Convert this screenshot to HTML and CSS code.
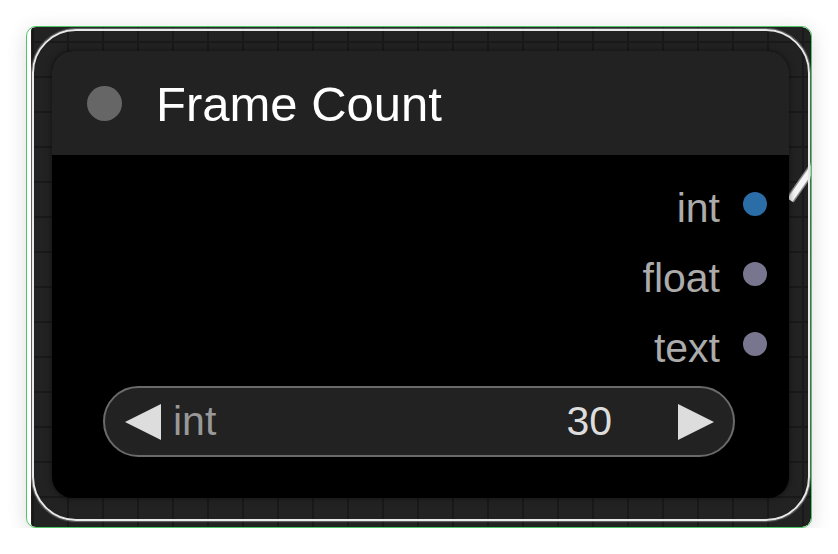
FILE: index.html
```html
<!DOCTYPE html>
<html>
<head>
<meta charset="utf-8">
<link rel="stylesheet" href="styles.css">
</head>
<body>
<div class="stage">
  <div class="card">
    <div class="canvas">
      <svg class="wire" width="40" height="60" viewBox="0 0 40 60">
        <line x1="3" y1="47" x2="31" y2="7" stroke="#8a8a8a" stroke-width="9" stroke-linecap="butt"/>
        <line x1="3" y1="47" x2="31" y2="7" stroke="#f4f4f4" stroke-width="6" stroke-linecap="butt"/>
      </svg>
      <div class="selection">
        <div class="node">
          <div class="title">
            <span class="title-dot"></span>
            <span class="title-text">Frame Count</span>
          </div>
          <div class="body">
            <div class="outputs">
              <div class="slot"><span class="slot-label">int</span><span class="slot-dot slot-int"></span></div>
              <div class="slot"><span class="slot-label">float</span><span class="slot-dot"></span></div>
              <div class="slot"><span class="slot-label">text</span><span class="slot-dot"></span></div>
            </div>
            <div class="widget">
              <span class="arrow arrow-left"></span>
              <span class="w-label">int</span>
              <span class="w-value">30</span>
              <span class="arrow arrow-right"></span>
            </div>
          </div>
        </div>
      </div>
    </div>
  </div>
</div>
</body>
</html>
```

FILE: styles.css
```css
html, body {
  margin: 0;
  padding: 0;
  background: #ffffff;
  font-family: "Liberation Sans", Arial, sans-serif;
}

.stage {
  padding: 26px 0 0 26px;
}

.card {
  width: 786px;
  height: 502px;
  box-sizing: border-box;
  border: 1px solid #4cc764;
  border-radius: 10px;
  overflow: hidden;
  background: #ffffff;
  padding-left: 4px;
  box-shadow: 0 4px 20px rgba(0, 0, 0, 0.14);
}

.canvas {
  position: relative;
  width: 780px;
  height: 500px;
  box-sizing: border-box;
  padding: 2px 0 0 1px;
  background-color: #222222;
  background-image:
    linear-gradient(#191919 2px, transparent 2px),
    linear-gradient(90deg, #191919 2px, transparent 2px);
  background-size: 35px 35px;
  background-position: 1px 14px;
  border-radius: 4px 9px 9px 4px;
  overflow: hidden;
}

.wire {
  position: absolute;
  left: 756px;
  top: 126px;
  z-index: 0;
}

.selection {
  position: relative;
  z-index: 1;
  width: 778px;
  height: 492px;
  box-sizing: border-box;
  border: 2px solid #e8e8e8;
  border-radius: 44px;
  padding: 20px 0 0 18px;
  box-shadow: 0 0 1px 1px rgba(150, 150, 150, 0.6);
}

.node {
  width: 737px;
  height: 447px;
  border-radius: 21px;
  overflow: hidden;
  background: #000000;
  display: flex;
  flex-direction: column;
  box-shadow: 0 0 6px rgba(0, 0, 0, 0.5);
}

.title {
  height: 104px;
  flex: none;
  background: #222222;
  display: flex;
  align-items: center;
  padding-left: 35px;
}

.title-dot {
  width: 35px;
  height: 35px;
  border-radius: 50%;
  background: #666666;
  flex: none;
}

.title-text {
  margin-left: 34px;
  font-size: 49px;
  line-height: 1;
  color: #ffffff;
  padding-top: 2px;
}

.body {
  flex: 1;
  padding-top: 18px;
  display: flex;
  flex-direction: column;
}

.outputs {
  display: flex;
  flex-direction: column;
  align-items: flex-end;
  padding-right: 22px;
}

.slot {
  height: 70px;
  display: flex;
  align-items: center;
  gap: 23px;
}

.slot-label {
  font-size: 41px;
  line-height: 70px;
  color: #ababab;
}

.slot-dot {
  width: 24px;
  height: 24px;
  border-radius: 50%;
  background: #78768e;
  margin-bottom: 8px;
  flex: none;
}

.slot-int {
  background: #2b6da6;
}

.widget {
  margin: 3px 54px 0 51px;
  height: 71px;
  box-sizing: border-box;
  border: 2px solid #6a6a6a;
  border-radius: 36px;
  background: #222222;
  display: flex;
  align-items: center;
  padding: 0 19px 0 20px;
}

.arrow {
  width: 0;
  height: 0;
  border-top: 18px solid transparent;
  border-bottom: 18px solid transparent;
  flex: none;
}

.arrow-left {
  border-right: 36px solid #dddddd;
}

.arrow-right {
  border-left: 36px solid #dddddd;
}

.w-label {
  flex: 1;
  margin-left: 12px;
  font-size: 41px;
  line-height: 1;
  color: #999999;
}

.w-value {
  margin-right: 66px;
  font-size: 41px;
  line-height: 1;
  color: #dddddd;
}
```
